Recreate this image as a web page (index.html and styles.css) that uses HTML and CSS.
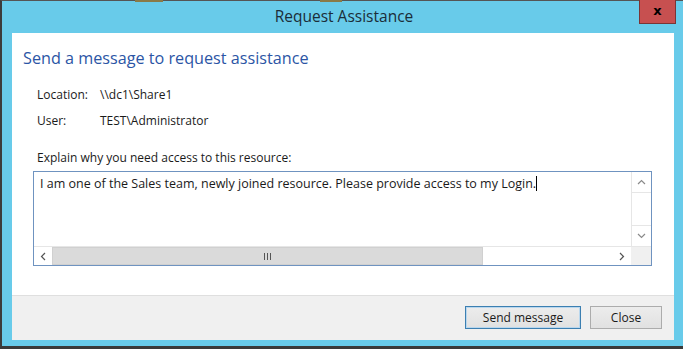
FILE: index.html
```html
<!DOCTYPE html>
<html lang="en">
<head>
  <meta charset="UTF-8">
  <title>Request Assistance</title>
  <link rel="stylesheet" href="styles.css">
</head>
<body>
  <div class="window">
    <div class="titlebar">
      <span class="bg-bit one"></span>
      <span class="bg-bit two"></span>
      <div class="title">Request Assistance</div>
      <div class="close-btn" title="Close">x</div>
    </div>
    <div class="client">
      <div class="content">
        <h1>Send a message to request assistance</h1>
        <div class="info">
          <div class="row"><span class="label">Location:</span><span>\\dc1\Share1</span></div>
          <div class="row"><span class="label">User:</span><span>TEST\Administrator</span></div>
        </div>
        <div class="prompt">Explain why you need access to this resource:</div>
        <div class="textbox">
          <div class="text-area">
            <div class="text">I am one of the Sales team, newly joined resource. Please provide access to my Login.<span class="caret"></span></div>
            <div class="vscroll">
              <div class="arrow">
                <svg width="9" height="6" viewBox="0 0 9 6"><path d="M1 5 L4.5 1.5 L8 5" fill="none" stroke="#8a8a8a" stroke-width="1.2"/></svg>
              </div>
              <div class="vtrack"></div>
              <div class="arrow">
                <svg width="9" height="6" viewBox="0 0 9 6"><path d="M1 1 L4.5 4.5 L8 1" fill="none" stroke="#8a8a8a" stroke-width="1.2"/></svg>
              </div>
            </div>
          </div>
          <div class="hscroll">
            <div class="harrow">
              <svg width="6" height="9" viewBox="0 0 6 9"><path d="M5 1 L1.5 4.5 L5 8" fill="none" stroke="#555" stroke-width="1.2"/></svg>
            </div>
            <div class="thumb"><span class="grip"></span><span class="grip"></span><span class="grip"></span></div>
            <div class="htrack"></div>
            <div class="harrow">
              <svg width="6" height="9" viewBox="0 0 6 9"><path d="M1 1 L4.5 4.5 L1 8" fill="none" stroke="#555" stroke-width="1.2"/></svg>
            </div>
            <div class="corner"></div>
          </div>
        </div>
      </div>
      <div class="footer">
        <button class="btn default">Send message</button>
        <button class="btn">Close</button>
      </div>
    </div>
  </div>
</body>
</html>
```

FILE: styles.css
```css
* {
  box-sizing: border-box;
  margin: 0;
  padding: 0;
}

body {
  font-family: "Open Sans", "Noto Sans", sans-serif;
  font-size: 12px;
  color: #1a1a1a;
  background: #3a3a3a;
}

.window {
  width: 683px;
  height: 349px;
  background: #68cbea;
  border-left: 2px solid #3c3c3c;
  border-top: 1px solid #555;
  border-bottom: 3px solid #3a3a3a;
  padding: 0 9px 6px 10px;
  display: flex;
  flex-direction: column;
}

/* Title bar */
.titlebar {
  height: 32px;
  position: relative;
  display: flex;
  align-items: center;
  justify-content: center;
}

.title {
  font-size: 15.5px;
  color: #1b2d38;
  margin-top: -2px;
  margin-left: 2px;
}

.bg-bit {
  position: absolute;
  top: -1px;
  height: 2px;
  background: #8a7a48;
}

.bg-bit.one { left: 123px; width: 28px; }
.bg-bit.two { left: 308px; width: 22px; }

.close-btn {
  position: absolute;
  top: -1px;
  right: -2px;
  width: 37px;
  height: 24px;
  background: #c75050;
  border: 1px solid #7a3535;
  border-top: none;
  color: #000;
  font-family: "DejaVu Sans", sans-serif;
  font-weight: bold;
  font-size: 13px;
  display: flex;
  align-items: center;
  justify-content: center;
  padding-bottom: 3px;
}

/* Client area */
.client {
  flex: 1;
  background: #fff;
  display: flex;
  flex-direction: column;
}

.content {
  flex: 1;
  padding: 13px 20px 0 11px;
}

h1 {
  font-weight: normal;
  font-size: 16.2px;
  color: #2b55a5;
  line-height: 24px;
}

.info {
  padding: 12px 0 0 14px;
}

.row {
  display: flex;
  line-height: 26px;
}

.label {
  width: 63px;
}

.prompt {
  padding: 15px 0 0 14px;
  line-height: 17px;
}

/* Text box with scroll bars */
.textbox {
  margin: 5px 0 0 10px;
  width: 619px;
  height: 95px;
  border: 1px solid #6f93c0;
  display: flex;
  flex-direction: column;
}

.text-area {
  flex: 1;
  display: flex;
}

.text {
  flex: 1;
  padding: 3px 0 0 6px;
  line-height: 17px;
  font-size: 12.5px;
}

.caret {
  display: inline-block;
  width: 1px;
  height: 15px;
  background: #000;
  vertical-align: -3px;
}

.vscroll {
  width: 20px;
  display: flex;
  flex-direction: column;
  border-left: 1px solid #e6e6e6;
}

.arrow {
  height: 20px;
  display: flex;
  align-items: center;
  justify-content: center;
}

.vtrack {
  flex: 1;
  border-top: 1px solid #e6e6e6;
  border-bottom: 1px solid #e6e6e6;
}

.hscroll {
  height: 19px;
  display: flex;
  border-top: 1px solid #e6e6e6;
}

.harrow {
  width: 18px;
  display: flex;
  align-items: center;
  justify-content: center;
}

.thumb {
  width: 431px;
  background: #dadada;
  border: 1px solid #d0d0d0;
  display: flex;
  align-items: center;
  justify-content: center;
  gap: 2px;
}

.grip {
  width: 1px;
  height: 7px;
  background: #555;
}

.htrack {
  flex: 1;
}

.corner {
  width: 20px;
  background: #f0f0f0;
}

/* Footer */
.footer {
  height: 45px;
  background: #f0f0f0;
  border-top: 1px solid #dfdfdf;
  display: flex;
  align-items: center;
  justify-content: flex-end;
  gap: 9px;
  padding: 0 12px 2px 0;
}

.btn {
  height: 23px;
  background: linear-gradient(#ececec, #e1e1e1);
  border: 1px solid #acacac;
  font-family: inherit;
  font-size: 12px;
  color: #1a1a1a;
}

.btn.default {
  width: 116px;
  border-color: #3c7fb1;
  box-shadow: inset 0 0 0 1px #b9d7ee;
}

.btn:not(.default) {
  width: 72px;
}
```
